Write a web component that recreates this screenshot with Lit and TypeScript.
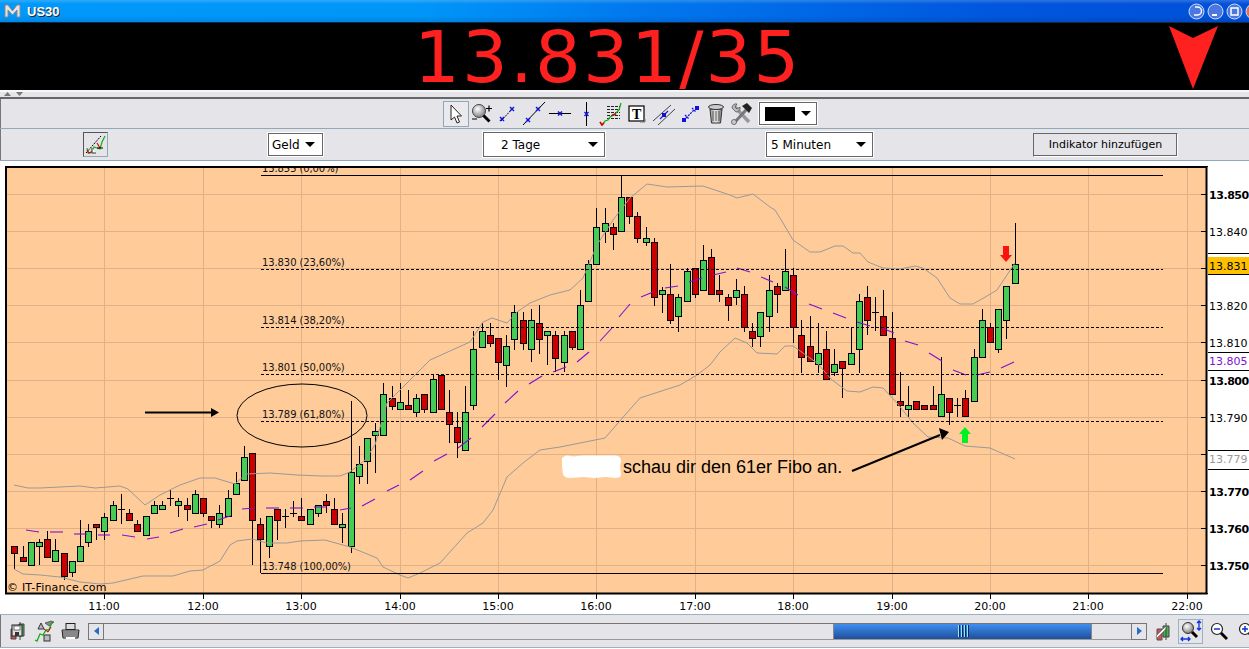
import { LitElement, html, css, svg } from "lit";
import { customElement } from "lit/decorators.js";

// [wickTop, bodyTop, bodyBottom, wickBottom, kind]  g=green r=red d=doji
type C = [number, number, number, number, string];
const CANDLES: C[] = [
[546,546,553,569,"r"],[546,557,561,561,"r"],[542,542,565,565,"g"],[539,542,546,565,"g"],[531,539,557,557,"r"],[539,550,561,561,"g"],[553,553,576,580,"r"],[561,561,572,577,"g"],
[520,546,561,561,"g"],[524,531,542,547,"g"],[524,524,527,540,"r"],[513,517,531,540,"g"],[501,505,520,520,"g"],[494,509,509,524,"d"],[509,513,520,520,"r"],[520,524,531,531,"r"],
[516,516,535,535,"g"],[501,505,513,513,"g"],[501,505,509,509,"g"],[490,498,498,506,"d"],[498,501,505,517,"g"],[498,505,509,521,"r"],[490,494,513,513,"g"],[498,498,513,517,"r"],
[516,516,520,528,"r"],[505,513,524,528,"g"],[490,498,516,516,"g"],[472,483,494,494,"g"],[446,457,480,480,"g"],[453,453,520,565,"r"],[518,524,539,573,"r"],[516,516,546,558,"g"],
[509,509,520,540,"r"],[509,516,516,528,"d"],[501,513,513,517,"d"],[498,516,520,520,"r"],[509,509,524,524,"g"],[505,505,513,517,"g"],[494,501,505,513,"r"],[498,509,524,524,"r"],
[513,524,527,543,"g"],[401,472,546,553,"g"],[446,464,476,484,"g"],[438,438,461,484,"g"],[423,431,435,473,"g"],[383,394,435,435,"g"],[386,398,406,410,"r"],[383,402,409,409,"g"],
[390,405,409,409,"r"],[394,398,412,417,"g"],[394,394,409,413,"r"],[375,379,412,412,"g"],[375,375,409,409,"r"],[390,412,424,443,"r"],[412,427,442,458,"r"],[386,412,450,450,"g"],
[331,349,405,410,"g"],[323,331,347,347,"g"],[323,335,343,347,"r"],[338,338,362,380,"r"],[335,346,365,387,"g"],[305,312,339,350,"g"],[312,320,343,350,"r"],[309,320,349,362,"g"],
[305,323,339,354,"r"],[331,331,335,365,"g"],[331,335,358,372,"r"],[331,335,362,372,"g"],[331,331,347,350,"r"],[290,305,349,349,"g"],[260,264,301,301,"g"],[208,227,264,264,"g"],
[208,223,231,243,"g"],[223,227,234,250,"r"],[176,197,231,231,"g"],[197,197,216,224,"r"],[212,216,238,243,"r"],[227,238,242,246,"g"],[238,242,297,306,"r"],[287,290,294,313,"g"],
[264,294,320,324,"r"],[294,297,316,332,"g"],[268,271,301,301,"g"],[268,268,294,298,"r"],[245,260,290,290,"g"],[249,257,294,294,"r"],[275,290,294,302,"r"],[294,297,305,321,"r"],
[279,290,297,305,"g"],[286,294,327,332,"r"],[323,331,338,347,"r"],[312,312,336,347,"g"],[275,290,316,332,"g"],[283,286,294,313,"r"],[249,271,290,290,"g"],[268,275,327,343,"r"],
[320,335,357,373,"r"],[316,346,361,361,"r"],[323,353,364,373,"g"],[331,349,379,379,"r"],[349,364,372,376,"g"],[361,361,368,398,"r"],[327,353,364,364,"g"],[294,301,349,373,"g"],
[286,297,320,335,"r"],[297,312,312,331,"d"],[290,316,335,335,"r"],[312,338,394,394,"r"],[372,401,405,417,"r"],[386,405,409,417,"g"],[401,401,409,409,"r"],[405,405,409,409,"r"],
[386,405,409,409,"r"],[357,394,416,416,"g"],[398,398,412,425,"r"],[398,405,405,417,"d"],[390,398,416,416,"r"],[349,357,401,401,"g"],[309,320,357,357,"g"],[323,327,342,342,"r"],
[309,309,349,353,"g"],[286,286,320,339,"g"],[223,264,283,283,"g"],
];

const UPPER = "14,485 28,488 40,488 60,487 80,486 95,488 120,486 128,489 145,505 160,495 180,485 200,478 215,478 235,484 246,474 270,473 297,475 322,476 340,476 350,472 365,460 375,445 383,417 387,403 397,393 407,383 430,360 470,342 483,322 492,318 507,323 517,312 530,303 550,295 570,290 583,278 597,245 613,220 630,198 647,184 667,187 703,186 730,195 737,198 753,194 770,207 775,210 783,223 793,240 810,252 820,252 835,246 843,246 853,253 860,253 868,262 883,268 900,269 915,266 923,268 937,278 950,298 960,304 973,304 987,296 997,290 1007,275 1015,263";
const LOWER = "14,569 23,574 40,575 60,577 80,582 100,584 113,583 143,576 173,576 190,571 203,570 220,561 230,545 237,541 252,539 267,543 287,543 300,541 325,540 350,547 377,558 383,567 400,575 408,578 420,573 440,563 467,533 483,523 493,510 507,477 523,463 540,450 560,447 590,441 605,438 625,415 640,398 680,385 697,375 710,365 720,352 735,338 747,343 757,353 777,354 785,346 793,346 803,353 817,363 832,380 847,391 860,392 873,387 883,388 897,403 913,423 928,437 948,438 965,446 990,448 1015,459";
const MA: number[][] = [[26,530,39,532],[50,532,63,532],[74,534,87,534],[98,535,110,535],[122,535,135,537],[147,539,159,537],[170,533,183,529],[194,527,207,524],[218,520,230,516],[242,509,255,508],[266,508,279,508],[290,508,303,508],[314,507,327,507],[340,510,351,508],[362,506,375,499],[387,491,399,485],[410,480,423,471],[434,461,447,454],[458,448,471,438],[482,427,495,414],[505,403,518,391],[529,384,542,376],[553,372,566,367],[577,362,589,352],[600,341,612,328],[619,317,630,304],[641,297,653,292],[665,288,678,286],[689,282,702,278],[713,275,726,272],[737,268,750,272],[761,277,773,282],[785,287,798,295],[809,304,822,309],[833,313,846,318],[857,322,870,326],[882,328,894,333],[905,341,918,345],[929,353,942,361],[953,370,966,375],[977,375,990,372],[1001,368,1014,362]];

const HOURS = [[104,"11:00"],[203,"12:00"],[301,"13:00"],[400,"14:00"],[498,"15:00"],[596,"16:00"],[695,"17:00"],[793,"18:00"],[892,"19:00"],[990,"20:00"],[1088,"21:00"],[1187,"22:00"]] as [number,string][];
const GRIDY = [194,231,268,305,342,380,417,454,491,528,565];
const YLABELS = [[199,"13.850",1],[236,"13.840",0],[310,"13.820",0],[347,"13.810",0],[385,"13.800",1],[422,"13.790",0],[496,"13.770",1],[533,"13.760",1],[570,"13.750",1]] as [number,string,number][];
const FIBS = [[172,"13.855 (0,00%)",175,0],[266,"13.830 (23,60%)",269,1],[324,"13.814 (38,20%)",327,1],[371,"13.801 (50,00%)",374,1],[418,"13.789 (61,80%)",421,1],[570,"13.748 (100,00%)",573,0]] as [number,string,number,number][];

const mark = (x: number, y: number) => svg`<path d="M${x-2} ${y-2}l4 4M${x+2} ${y-2}l-4 4" stroke="#1010e0" stroke-width="1.4" fill="none"/>`;
const ICONS = [
  svg`<path d="M8 4v15l3.500-3 2.500 6 2.500-1-2.500-6h4.500z" fill="#fff" stroke="#222" stroke-width="1"/>`,
  svg`<defs><radialGradient id="gl" cx=".4" cy=".35" r=".7"><stop offset="0" stop-color="#fff"/><stop offset="1" stop-color="#777"/></radialGradient></defs><circle cx="10" cy="10" r="6.500" fill="url(#gl)" stroke="#444"/><path d="M14.500 14.500l6 6" stroke="#000" stroke-width="3"/><path d="M17 7.500h6M20 4.500v6M3 18h5" stroke="#000" stroke-width="1.200"/>`,
  svg`<path d="M6 20L18 7" stroke="#000" stroke-dasharray="2 1"/>${mark(7,18)}${mark(17,8)}`,
  svg`<path d="M2 24L24 1" stroke="#000"/>${mark(7,19)}${mark(17,8)}`,
  svg`<path d="M2 12.500h22" stroke="#000"/>${mark(13,12.5)}`,
  svg`<path d="M13.500 1v24" stroke="#000"/>${mark(13.5,13)}`,
  svg`<path d="M8 5.500h13M8 8.500h13M8 11.500h13M8 14.500h13M8 17.500h13" stroke="#222" stroke-dasharray="3 1"/><path d="M1 21l2 3 3-4 3-1 2-3 4-2 3-3 2-2 2-7" fill="none" stroke="#10b010" stroke-width="1.300"/><path d="M1 21l2 3 2-2M13 14l4-1" fill="none" stroke="#e00000" stroke-width="1.500"/>`,
  svg`<rect x="4" y="5" width="15" height="15" fill="#fff" stroke="#000" stroke-width="1.200"/><text x="7" y="18" class="ti">T</text><path d="M15 21h5v-3" fill="none" stroke="#777"/>`,
  svg`<path d="M2 20L20 4M7 24L24 8" stroke="#444"/><path d="M9 18L17 10" stroke="#2020e0" stroke-width="1.200"/><rect x="11" y="12" width="4" height="4" fill="#1010d0"/>`,
  svg`<rect x="5" y="17" width="4" height="4" fill="#1010e0"/><rect x="18" y="5" width="4" height="4" fill="#1010e0"/><path d="M8 14l4 4M15 7l4 4M9 17l8-8" stroke="#1010e0" stroke-width="1.300" stroke-dasharray="2 1"/>`,
  svg`<defs><linearGradient id="tr" x1="0" x2="1"><stop offset="0" stop-color="#999"/><stop offset=".5" stop-color="#eee"/><stop offset="1" stop-color="#777"/></linearGradient></defs><path d="M7 8h12l-1.500 14h-9z" fill="url(#tr)" stroke="#333"/><path d="M10 10v10M13 10v10M16 10v10" stroke="#555"/><ellipse cx="13" cy="6" rx="7.500" ry="2.500" fill="#ccc" stroke="#333"/>`,
  svg`<path d="M5 5l15 16" stroke="#999" stroke-width="3.500"/><path d="M3 7a4 4 0 0 1 5-4l-2 3 2 2 3-2a4 4 0 0 1-4 5z" fill="#bbb" stroke="#444" stroke-width=".7"/><path d="M6 21L17 9" stroke="#777" stroke-width="3"/><path d="M13 5l5-3 5 5-3 5z" fill="#222"/><circle cx="5" cy="21" r="2.500" fill="#ccc" stroke="#444" stroke-width=".7"/>`,
];

@customElement("app-root")
export class AppRoot extends LitElement {
  static styles = css`
    :host { display: block; width: 1249px; height: 649px; overflow: hidden; background: #fff; font-family: "DejaVu Sans", sans-serif; color: #000; }
    .title { height: 22px; border-bottom: 1px solid #0a2a50; display: flex; align-items: center; background: linear-gradient(180deg, rgba(255,255,255,.18) 0, rgba(255,255,255,0) 4px, rgba(0,0,0,0) 16px, rgba(0,0,60,.12) 22px), linear-gradient(90deg, #0098fa 0, #0096f8 420px, #0078ee 640px, #0056dc 1000px, #0050d8 1249px); }
    .logo { margin-left: 4px; width: 17px; height: 16px; }
    .title-text { margin-left: 6px; font: bold 13px "Liberation Sans", Arial, sans-serif; color: #fff; text-shadow: 1px 1px 0 #222; flex: 1; }
    .winbtns { display: flex; gap: 2px; margin-right: -13px; }
    .quote { height: 67px; background: #000; display: flex; align-items: center; padding-left: 414px; position: relative; }
    .price { font-size: 72px; line-height: 67px; color: #ff2020; letter-spacing: 2.200px; white-space: nowrap; margin-top: 2px; }
    .down { position: absolute; left: 1169px; top: 2px; }
    .split { position: relative; height: 7px; background: linear-gradient(180deg, #f6f6f6 0 2px, #e4e4e9 2px); border-bottom: 2px solid #666; display: flex; align-items: flex-end; gap: 5px; padding-left: 4px; }
    .tri { width: 7px; height: 4px; margin-bottom: 1px; }
    .bar1 { position: relative; height: 29px; background: #e4e4e9; display: flex; align-items: center; padding-left: 443px; box-shadow: inset 1px 0 0 #777; }
    .tool { width: 26px; height: 26px; flex: none; box-sizing: border-box; }
    .tool svg { display: block; width: 26px; height: 26px; }
    .tool.sel { border: 1px solid #8fa9b8; background: #e9e9ee; }
    .tool.sel svg { margin: -1px; }
    .ti { font: bold 14px "Liberation Serif", serif; fill: #000; }
    .color { margin-left: 4px; }
    .swatch { width: 30px; height: 14px; background: #000; }
    .bar2 { height: 31px; background: #e4e4e9; border-top: 1px solid #8fa9b8; border-bottom: 1px solid #8fa9b8; display: flex; align-items: center; gap: 160px; padding-left: 83px; box-shadow: inset 1px 0 0 #777; }
    .iconbtn { width: 25px; height: 25px; box-sizing: border-box; border: 1px solid #8fa9b8; border-top-color: #555; border-left-color: #555; }
    .iconbtn svg { display: block; }
    .sel-box { height: 23px; box-sizing: border-box; background: #fff; border: 1px solid #666; outline: 1px solid #fff; outline-offset: 0; display: flex; align-items: center; font-size: 12px; justify-content: space-between; white-space: nowrap; }
    .sel-geld { width: 55px; padding: 0 7px 0 3px; }
    .sel-tage { width: 122px; height: 25px; padding: 0 6px 0 17px; }
    .sel-min { width: 107px; height: 25px; padding: 0 6px 0 4px; margin-left: 1px; }
    .color.sel-box { width: 58px; height: 23px; padding: 0 5px; }
    .arrow { width: 0; height: 0; border-left: 5px solid transparent; border-right: 5px solid transparent; border-top: 5px solid #000; }
    .add { width: 145px; height: 24px; box-sizing: border-box; border: 1px solid #666; border-right-color: #fff; border-bottom-color: #fff; box-shadow: inset -1px -1px 0 #666; background: #e4e4e9; font: 11px "DejaVu Sans", sans-serif; display: flex; align-items: center; justify-content: center; padding: 0; color: #000; }
    .chart { display: block; width: 1249px; height: 453px; }
    .lab { font: 10px "DejaVu Sans", sans-serif; fill: #111; letter-spacing: -.1px; }
    .axis { font: 11px "DejaVu Sans", sans-serif; fill: #000; }
    .axis-b { font: bold 11px "DejaVu Sans", sans-serif; fill: #000; letter-spacing: -.45px; }
    .axis-p { font: 11px "DejaVu Sans", sans-serif; fill: #8010d0; }
    .axis-g { font: 11px "DejaVu Sans", sans-serif; fill: #999; }
    .note { font: 18px "Liberation Sans", Arial, sans-serif; fill: #000; }
    .copy { font: 11px "DejaVu Sans", sans-serif; fill: #000; letter-spacing: .2px; }
    .bottom { height: 32px; background: #e4e4e9; border-top: 1px solid #9ab2c0; border-bottom: 1px solid #9ab2c0; display: flex; align-items: center; box-shadow: inset 1px 0 0 #777; box-sizing: content-box; }
    .bi { display: block; flex: none; }
    .bi1 { margin-left: 9px; } .bi2 { margin-left: 8px; } .bi3 { margin-left: 6px; }
    .scroll { margin-left: 8px; width: 1059px; height: 17px; display: flex; flex: none; }
    .sb { width: 16px; box-sizing: border-box; border: 1px solid #777; background: #e4e4e9; display: flex; align-items: center; justify-content: center; flex: none; }
    .sb-l { width: 0; height: 0; border-top: 4px solid transparent; border-bottom: 4px solid transparent; border-right: 5px solid #2a6ac8; }
    .sb-r { width: 0; height: 0; border-top: 4px solid transparent; border-bottom: 4px solid transparent; border-left: 5px solid #2a6ac8; }
    .track { flex: 1; display: flex; border-top: 1px solid #777; border-bottom: 1px solid #999; box-sizing: border-box; background: #e4e4e9; }
    .track-a { width: 729px; flex: none; }
    .thumb { width: 259px; flex: none; background: linear-gradient(180deg, #3f8ef0, #1f4f9a); border-left: 1px solid #888; border-right: 1px solid #888; box-sizing: border-box; display: flex; align-items: center; justify-content: center; gap: 2px; }
    .grip { width: 1px; height: 12px; background: #8fe8ff; box-shadow: 1px 0 0 #0a2a60; }
    .zs { width: 25px; height: 25px; box-sizing: border-box; border: 1px solid #9ab2c0; margin-left: 8px; flex: none; }
    .zo { margin-left: 7px; } .zi { margin-left: 10px; }
    .rw { margin-left: 7px; }
  `;

  private winBtn(c: string, glyph: unknown) {
    return svg`<svg width="17" height="17" viewBox="0 0 17 17"><circle cx="8.500" cy="8.500" r="7.500" fill="${c}" stroke="#cfe0ff" stroke-width="1"/>${glyph}</svg>`;
  }

  private chart() {
    const X = (n: number) => Math.round(14.3 + n * 8.2);
    return html`<svg class="chart" viewBox="0 161 1249 453" xmlns="http://www.w3.org/2000/svg">
      <defs><clipPath id="cp"><rect x="6" y="167" width="1201" height="427"/></clipPath></defs>
      <rect x="6" y="167" width="1200" height="426" fill="#ffcc99"/>
      <g clip-path="url(#cp)">
        <g stroke="#e0b088" stroke-width="1" shape-rendering="crispEdges">
          ${HOURS.map(([x]) => svg`<path d="M${x+.5} 167V594"/>`)}
          ${GRIDY.map((y) => svg`<path d="M6 ${y+.5}H1207"/>`)}
        </g>
        ${FIBS.map(([by, t]) => svg`<text class="lab" x="262" y="${by}">${t}</text>`)}
        <text class="copy" x="7" y="591">© IT-Finance.com</text>
        <g shape-rendering="crispEdges">
          ${CANDLES.map((c, i) => {
            const x = X(i);
            const [t, a, b, w, k] = c;
            if (k === "d") return svg`<path d="M${x+.5} ${t}V${w}M${x-3} ${a+.5}H${x+4}" stroke="#000"/>`;
            return svg`<path d="M${x+.5} ${t}V${w}" stroke="#000"/><rect x="${x-3+.5}" y="${a+.5}" width="6" height="${b-a}" fill="${k==="g"?"#44cc55":"#cc0000"}" stroke="#000"/>`;
          })}
        </g>
        <polyline points="${UPPER}" fill="none" stroke="#999" stroke-width="1"/>
        <polyline points="${LOWER}" fill="none" stroke="#999" stroke-width="1"/>
        ${MA.map((m) => svg`<path d="M${m[0]} ${m[1]}L${m[2]} ${m[3]}" stroke="#8010d0" stroke-width="1.100"/>`)}
        <g shape-rendering="crispEdges" stroke="#000">
          ${FIBS.map(([, , y, dash]) => svg`<path d="M261 ${y+.5}H1163" stroke-dasharray="${dash ? "3 2" : "none"}"/>`)}
        </g>
        <ellipse cx="302" cy="415.500" rx="65" ry="31.500" fill="none" stroke="#000" stroke-width="1"/>
        <path d="M145 412.500H212" stroke="#000" stroke-width="2"/><path d="M211 408l8 4.500-8 4.500z" fill="#000"/>
        <path d="M562 458q3-3 6-2.500l6 1 8-1h34q5 1 5 5l-1 6 1 8q0 3-5 3.500l-10-1-12 1-10-1-14 1q-6 0-7-4l-1-7z" fill="#fff"/>
        <text class="note" x="623" y="473">schau dir den 61er Fibo an.</text>
        <path d="M852 471L940 435" stroke="#000" stroke-width="2"/><path d="M939 428l10 4-7 8z" fill="#000"/>
        <path d="M1003 246h6v9h3l-6 7-6-7h3z" fill="#ff1010"/>
        <path d="M965 427l6 7h-3v9h-6v-9h-3z" fill="#00f020"/>
      </g>
      <g stroke="#000" shape-rendering="crispEdges">
        ${HOURS.map(([x]) => svg`<path d="M${x+.5} 594V599"/>`)}
        ${GRIDY.map((y) => svg`<path d="M1201 ${y+.5}H1206"/>`)}
      </g>
      <rect x="6" y="167" width="1200.500" height="426.500" fill="none" stroke="#000" stroke-width="2"/>
      <path d="M1206 166.500h2M1206 593.500h2" stroke="#000"/>
      ${HOURS.map(([x, t]) => svg`<text class="axis" x="${x}" y="610" text-anchor="middle">${t}</text>`)}
      ${YLABELS.map(([y, t, b]) => svg`<text class="${b ? "axis-b" : "axis"}" x="1209" y="${y}">${t}</text>`)}
      <path d="M1208 253.500H1249M1208 274.500H1249M1208 352.500H1249M1208 370.500H1249M1208 450.500H1249M1208 469.500H1249" stroke="#000" shape-rendering="crispEdges"/>
      <rect x="1208" y="257" width="41" height="17" fill="#ffc000"/>
      <text class="axis" x="1209" y="270">13.831</text>
      <text class="axis-p" x="1209" y="365">13.805</text>
      <text class="axis-g" x="1209" y="463">13.779</text>
    </svg>`;
  }

  render() {
    return html`
      <div class="title">
        <svg class="logo" viewBox="0 0 17 16"><path d="M1 14V2h3l4.500 6L13 2h3v12h-3V7l-4.500 5L4 7v7z" fill="#e4e4e4" stroke="#8a8a8a" stroke-width="1"/></svg>
        <div class="title-text">US30</div>
        <div class="winbtns">
          ${this.winBtn("#4a78e0", svg`<path d="M7 4h2.500a3.500 3.500 0 0 1 0 8H6" fill="none" stroke="#fff" stroke-width="1.400"/>`)}
          ${this.winBtn("#4a78e0", svg`<path d="M5 12h5" stroke="#fff" stroke-width="2"/>`)}
          ${this.winBtn("#4a78e0", svg`<rect x="5" y="5" width="7" height="7" fill="none" stroke="#fff" stroke-width="1.500"/>`)}
          ${this.winBtn("#e07050", svg``)}
        </div>
      </div>
      <div class="quote">
        <div class="price">13.831/35</div>
        <svg class="down" width="50" height="66" viewBox="0 0 50 66"><path d="M0 1L24 13 49 1 24 64z" fill="#ff2020"/></svg>
      </div>
      <div class="split">
        <svg class="tri" viewBox="0 0 7 4"><path d="M0 4L3.500 0 7 4z" fill="#777"/></svg>
        <svg class="tri" viewBox="0 0 7 4"><path d="M0 0L3.500 4 7 0z" fill="#777"/></svg>
      </div>
      <div class="bar1">
        ${ICONS.map((ic, i) => html`<div class="tool ${i === 0 ? "sel" : ""}"><svg viewBox="0 0 26 26">${ic}</svg></div>`)}
        <div class="color sel-box"><div class="swatch"></div><div class="arrow"></div></div>
      </div>
      <div class="bar2">
        <div class="iconbtn"><svg width="23" height="23" viewBox="0 0 23 23">
          <path d="M2 20L17 3" stroke="#000" stroke-dasharray="2 1"/>
          <path d="M3 15l1 5 3 0 3-6 3 1 3 1 2-7 3-6" fill="none" stroke="#10b010" stroke-width="1.200"/>
          <path d="M3 17l2 3 2-1M13 10l3 5" fill="none" stroke="#e00000" stroke-width="1.200"/>
          <path d="M13 15h6" stroke="#000"/><path d="M8 15v5h4" fill="#fff" stroke="#333"/>
        </svg></div>
        <div class="sel-box sel-geld"><span>Geld</span><div class="arrow"></div></div>
        <div class="sel-box sel-tage"><span>2 Tage</span><div class="arrow"></div></div>
        <div class="sel-box sel-min"><span>5 Minuten</span><div class="arrow"></div></div>
        <button class="add">Indikator hinzufügen</button>
      </div>
      ${this.chart()}
      <div class="bottom">
        <svg class="bi bi1" width="17" height="20" viewBox="0 0 17 20"><path d="M2 8h5v10H2z" fill="#d05050" stroke="#444"/><path d="M11 1v18M10 3h5v12h-5z" fill="#44b050" stroke="#444"/><rect x="3" y="4" width="10" height="11" fill="#ddd" stroke="#222"/><rect x="5" y="5" width="6" height="4" fill="#fff" stroke="#222" stroke-width=".6"/><rect x="6" y="11" width="4" height="4" fill="#333"/></svg>
        <svg class="bi bi2" width="21" height="22" viewBox="0 0 21 22"><path d="M4 9l3-6 3 6z" fill="#bbb" stroke="#333"/><path d="M11 3l6-2 3 1-5 4z" fill="#888" stroke="#333" stroke-width=".6"/><rect x="10" y="15" width="6" height="6" fill="#bbb" stroke="#333"/><path d="M1 20l2 1 3-7 3 1 3-5 3 0 3-8" fill="none" stroke="#10b010" stroke-width="1.300"/><path d="M10 9l4 3 3-5" fill="none" stroke="#e00000"/></svg>
        <svg class="bi bi3" width="19" height="17" viewBox="0 0 19 17"><rect x="5" y="0.500" width="9" height="6" fill="#ddd" stroke="#222"/><path d="M1 7h17l-1 8H2z" fill="#ccc" stroke="#222"/><path d="M1 9h17M2 11h15M2 13h15" stroke="#222" stroke-width=".8"/><path d="M5 15h9" stroke="#fff" stroke-width="2"/></svg>
        <div class="scroll">
          <div class="sb"><div class="sb-l"></div></div>
          <div class="track">
            <div class="track-a"></div>
            <div class="thumb"><i class="grip"></i><i class="grip"></i><i class="grip"></i><i class="grip"></i></div>
          </div>
          <div class="sb"><div class="sb-r"></div></div>
        </div>
        <svg class="bi rw" width="16" height="19" viewBox="0 0 16 19"><path d="M3 7h5v11H3z" fill="#d05050" stroke="#555"/><path d="M12 1v17M9 4h6v11H9z" fill="#44b050" stroke="#444"/><path d="M2 14l8-8 3-2-2 4-1 1-7 7z" fill="#fff" stroke="#555" stroke-width=".6"/></svg>
        <div class="zs"><svg width="23" height="23" viewBox="0 0 23 23"><defs><radialGradient id="gb" cx=".4" cy=".35" r=".7"><stop offset="0" stop-color="#fff"/><stop offset="1" stop-color="#777"/></radialGradient></defs><circle cx="9" cy="8" r="5.500" fill="url(#gb)" stroke="#333"/><path d="M13 12l5 5" stroke="#000" stroke-width="3"/><path d="M20 1v9M18 3l2-2 2 2M18 8l2 2 2-2M2 19h9M4 17l-2 2 2 2M9 17l2 2-2 2" fill="none" stroke="#1030e0" stroke-width="1.300"/></svg></div>
        <svg class="bi zo" width="18" height="19" viewBox="0 0 18 19"><circle cx="7" cy="7" r="5.500" fill="#fff" stroke="#222" stroke-width="1.200"/><path d="M4 7h6" stroke="#1030d0" stroke-width="1.500"/><path d="M11 11l6 6" stroke="#000" stroke-width="3"/></svg>
        <svg class="bi zi" width="18" height="19" viewBox="0 0 18 19"><circle cx="7" cy="7" r="5.500" fill="#fff" stroke="#222" stroke-width="1.200"/><path d="M4 7h6M7 4v6" stroke="#1030d0" stroke-width="1.500"/><path d="M11 11l6 6" stroke="#000" stroke-width="3"/></svg>
      </div>
    `;
  }
}
